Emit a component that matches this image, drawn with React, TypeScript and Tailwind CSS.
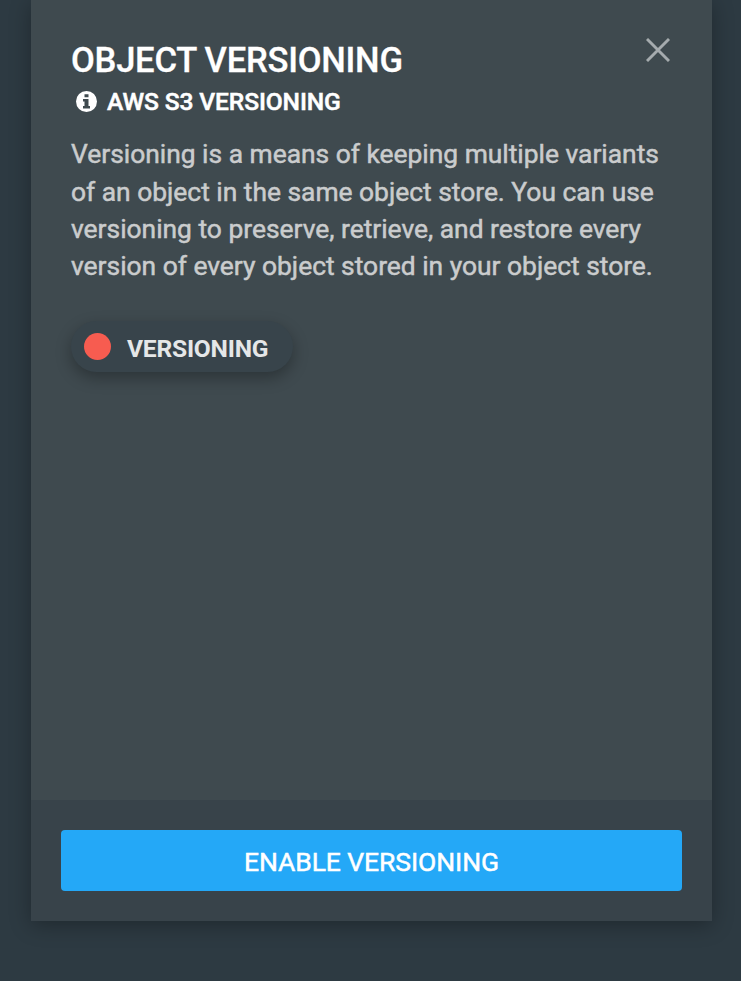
export default function App() {
  return (
    <div className="h-[981px] w-[741px] overflow-hidden bg-[#2d3a42] pr-[29px] pl-[31px] font-['Roboto',sans-serif]">
      <section className="flex h-[921px] flex-col bg-[#3f4a4f] shadow-[0_4px_20px_rgba(0,0,0,0.3)]">
        <div className="flex-1 px-10 pt-[38px]">
          <header className="flex h-[52px] justify-between">
            <h2 className="text-[34.600px] leading-[44px] font-medium tracking-[-0.25px] whitespace-nowrap text-white [-webkit-text-stroke:0.3px_#fff]">OBJECT VERSIONING</h2>
            <button aria-label="Close" className="mr-[2px] h-6 w-6">
              <svg viewBox="0 0 24 24" className="h-6 w-6" fill="none" stroke="#a5abae" strokeWidth="2.9"><path d="M1 1 23 23M23 1 1 23" /></svg>
            </button>
          </header>
          <div className="flex h-6 items-center pl-[5px]">
            <svg viewBox="0 0 22 22" className="mr-[9px] h-[22px] w-[22px]"><circle cx="10.500" cy="10.500" r="10.5" fill="#fff" /><path d="M8.500 3.3h4v3h-4zM7 8H12.500v7H14v2.500H7V15h1.500v-4.500H7z" fill="#3f4a4f" /></svg>
            <span className="text-[24.600px] leading-6 font-medium tracking-[-0.13px] whitespace-nowrap text-white [-webkit-text-stroke:0.5px_#fff]">AWS S3 VERSIONING</span>
          </div>
          <p className="mt-[22.300px] text-[26.400px] leading-[37.300px] tracking-[-0.01px] whitespace-nowrap text-[#cacccd] [-webkit-text-stroke:0.5px_#cacccd]">
            Versioning is a means of keeping multiple variants<br />
            of an object in the same object store. You can use<br />
            versioning to preserve, retrieve, and restore every<br />
            version of every object stored in your object store.
          </p>
          <div className="mt-[35.500px] flex h-[51px] w-[222px] items-center rounded-full bg-[#38444b] pl-[13px] shadow-[0_6px_16px_rgba(0,0,0,0.3)]">
            <span className="mr-4 h-[27px] w-[27px] rounded-full bg-[#f75c50]" />
            <span className="pt-[5px] text-[24.600px] leading-8 font-bold tracking-[-0.23px] text-[#e5e7e8]">VERSIONING</span>
          </div>
        </div>
        <footer className="h-[121px] bg-[#38434a] p-[30px]">
          <button className="h-[61px] w-full rounded-[4px] bg-[#24a8f7] pt-[3px] text-[26.500px] tracking-[-0.08px] text-white [-webkit-text-stroke:0.5px_#fff]">ENABLE VERSIONING</button>
        </footer>
      </section>
    </div>
  );
}
